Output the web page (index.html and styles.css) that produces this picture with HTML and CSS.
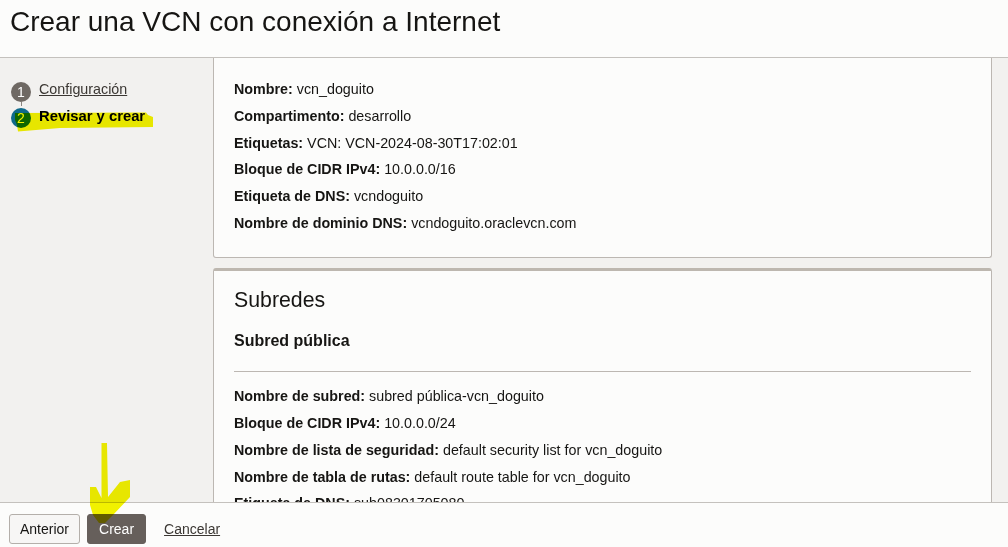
FILE: index.html
```html
<!DOCTYPE html>
<html lang="es">
<head>
<meta charset="utf-8">
<title>Crear una VCN con conexión a Internet</title>
<link rel="stylesheet" href="styles.css">
</head>
<body>
<div class="page">
  <header class="header">
    <h1 class="title">Crear una VCN con conexión a Internet</h1>
  </header>
  <div class="middle">
    <nav class="sidebar">
      <div class="step">
        <div class="marker">
          <span class="circle done">1</span>
          <span class="connector"></span>
        </div>
        <a class="step-label link" href="#">Configuración</a>
      </div>
      <div class="step">
        <div class="marker">
          <span class="circle current">2</span>
        </div>
        <span class="step-label current-label">Revisar y crear</span>
      </div>
    </nav>
    <main class="main">
      <section class="card card-top">
        <div class="row"><b>Nombre:</b> vcn_doguito</div>
        <div class="row"><b>Compartimento:</b> desarrollo</div>
        <div class="row"><b>Etiquetas:</b> VCN: VCN-2024-08-30T17:02:01</div>
        <div class="row"><b>Bloque de CIDR IPv4:</b> 10.0.0.0/16</div>
        <div class="row"><b>Etiqueta de DNS:</b> vcndoguito</div>
        <div class="row"><b>Nombre de dominio DNS:</b> vcndoguito.oraclevcn.com</div>
      </section>
      <section class="card card-sub">
        <h2 class="card-title">Subredes</h2>
        <h3 class="sub-title">Subred pública</h3>
        <hr class="divider">
        <div class="row"><b>Nombre de subred:</b> subred pública-vcn_doguito</div>
        <div class="row"><b>Bloque de CIDR IPv4:</b> 10.0.0.0/24</div>
        <div class="row"><b>Nombre de lista de seguridad:</b> default security list for vcn_doguito</div>
        <div class="row"><b>Nombre de tabla de rutas:</b> default route table for vcn_doguito</div>
        <div class="row"><b>Etiqueta de DNS:</b> sub08301705080</div>
        <div class="row"><b>Tipo de subred:</b> Regional</div>
      </section>
    </main>
  </div>
  <footer class="footer">
    <button class="btn btn-secondary" type="button">Anterior</button>
    <button class="btn btn-primary" type="button">Crear</button>
    <a class="cancel" href="#">Cancelar</a>
  </footer>

  <svg class="mark mark-highlight" viewBox="0 100 160 40" width="160" height="40" aria-hidden="true">
    <polygon points="15,113 146,112.5 148,115 153,117 153,127 60,128 30,130.5 18,131.5 17,125 15,120" fill="#f4f400"/>
  </svg>
  <svg class="mark mark-arrow" viewBox="80 435 60 100" width="60" height="100" aria-hidden="true">
    <polygon points="101.5,443 107,443 108,497 120,482 130,480 130,497 113,515 105,523 99,523 93,515 90,505 90,487 96,487 101.5,498" fill="#f4f400"/>
  </svg>
</div>
</body>
</html>
```

FILE: styles.css
```css
* {
  box-sizing: border-box;
}

html,
body {
  margin: 0;
  padding: 0;
  height: 100%;
}

body {
  font-family: "Liberation Sans", Arial, sans-serif;
  color: #161513;
  background: #f2f1ef;
}

.page {
  position: relative;
  height: 100vh;
  display: flex;
  flex-direction: column;
  overflow: hidden;
}

.header {
  flex: 0 0 58px;
  background: #fcfcfb;
  border-bottom: 1px solid #c4c1bd;
  padding: 6px 10px 0;
}

.title {
  margin: 0;
  font-size: 28px;
  font-weight: normal;
  line-height: 32px;
  color: #161513;
}

.middle {
  flex: 1 1 auto;
  display: flex;
  min-height: 0;
  overflow: hidden;
}

.sidebar {
  flex: 0 0 213px;
  background: #f2f1ef;
  padding: 21px 0 0 11px;
}

.step {
  display: flex;
  gap: 8px;
  font-size: 14.3px;
}

.marker {
  display: flex;
  flex-direction: column;
  align-items: center;
  width: 20px;
}

.circle {
  width: 20px;
  height: 20px;
  margin-top: 2.5px;
  border-radius: 50%;
  color: #fff;
  font-size: 14px;
  line-height: 20px;
  text-align: center;
}

.circle.done {
  background: #6f6964;
}

.circle.current {
  background: #0e6a8b;
}

.connector {
  width: 1px;
  height: 4.2px;
  background: #8c857f;
}

.step-label {
  line-height: 20px;
}

.link {
  color: #3b3733;
  text-decoration: underline;
}

.current-label {
  font-weight: bold;
  font-size: 14.8px;
  color: #000;
}

.main {
  flex: 1 1 auto;
  padding: 0 16px 0 0;
  background: #f2f1ef;
  overflow: hidden;
}

.card {
  background: #fcfcfb;
  border: 1px solid #bcb7b2;
  padding: 0 20px;
  font-size: 14.3px;
}

.card-top {
  border-top: none;
  border-radius: 0 0 3px 3px;
  padding-top: 23px;
  padding-bottom: 25px;
}

.card-sub {
  margin-top: 10px;
  border-top: 3px solid #bdb7af;
  border-radius: 3px 3px 0 0;
  padding-top: 16px;
}

.row {
  line-height: 16.8px;
  margin-bottom: 10px;
  white-space: nowrap;
}

.card-top .row:last-child {
  margin-bottom: 0;
}

.row b {
  font-weight: bold;
}

.card-title {
  margin: 0;
  font-size: 21.3px;
  font-weight: normal;
  line-height: 26px;
}

.sub-title {
  margin: 18px 0 0;
  font-size: 16px;
  font-weight: bold;
  line-height: 20px;
}

.divider {
  margin: 20px 0 16.5px;
  border: none;
  border-top: 1px solid #bcb7b2;
  height: 0;
}

.footer {
  flex: 0 0 45px;
  background: #fcfcfb;
  border-top: 1px solid #c4c1bd;
  padding: 11px 9px 0;
  display: flex;
  align-items: flex-start;
}

.btn {
  font-family: "Liberation Sans", Arial, sans-serif;
  font-size: 14px;
  height: 30px;
  line-height: 28px;
  border-radius: 3px;
  padding: 0 10px;
  cursor: pointer;
}

.btn-secondary {
  background: #f7f6f5;
  border: 1px solid #b4afaa;
  color: #161513;
}

.btn-primary {
  margin-left: 7px;
  background: #665f5b;
  border: 1px solid #665f5b;
  color: #fff;
  padding: 0 11px;
}

.cancel {
  margin-left: 18px;
  font-size: 14px;
  line-height: 30px;
  color: #3b3733;
  text-decoration: underline;
}

.mark {
  position: absolute;
  mix-blend-mode: multiply;
  pointer-events: none;
}

.mark-highlight {
  left: 0;
  top: 100px;
}

.mark-arrow {
  left: 80px;
  top: 435px;
}
```
